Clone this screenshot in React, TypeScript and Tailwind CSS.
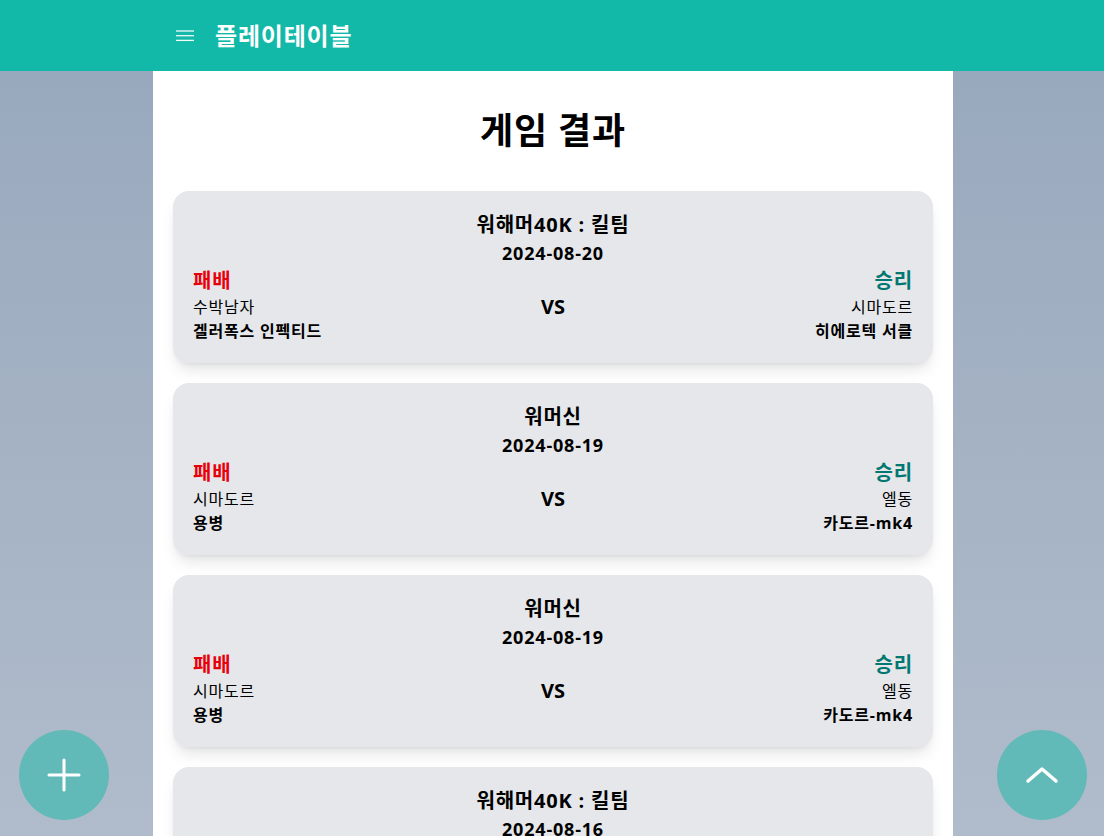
const games = [
  {
    title: "워해머40K : 킬팀",
    date: "2024-08-20",
    loser: { name: "수박남자", army: "겔러폭스 인펙티드" },
    winner: { name: "시마도르", army: "히에로텍 서클" },
  },
  {
    title: "워머신",
    date: "2024-08-19",
    loser: { name: "시마도르", army: "용병" },
    winner: { name: "엘동", army: "카도르-mk4" },
  },
  {
    title: "워머신",
    date: "2024-08-19",
    loser: { name: "시마도르", army: "용병" },
    winner: { name: "엘동", army: "카도르-mk4" },
  },
  {
    title: "워해머40K : 킬팀",
    date: "2024-08-16",
    loser: { name: "엘동", army: "헌터 클레이드" },
    winner: { name: "수박남자", army: "겔러폭스 인펙티드" },
  },
];

export default function App() {
  return (
    <div
      className="h-screen overflow-hidden bg-gradient-to-b from-[#97a7bc] to-[#b0bccb] tracking-[0.05em]"
      style={{ fontFamily: '"Open Sans", "Noto Sans CJK KR", sans-serif' }}
    >
      <header className="h-[71px] bg-[#13b9a8]">
        <div className="w-[800px] mx-auto translate-x-px h-full flex items-center pl-[22px] pr-5 gap-[20px]">
          <button className="w-[20px] h-[20px] flex items-center justify-center">
            <svg width="20" height="14" viewBox="0 0 20 14" fill="none" stroke="#f2fbfa" strokeWidth="1.3">
              <line x1="1" y1="2" x2="19" y2="2" />
              <line x1="1" y1="6.7" x2="19" y2="6.7" />
              <line x1="1" y1="11.4" x2="19" y2="11.4" />
            </svg>
          </button>
          <h1 className="text-2xl font-bold text-white leading-8">플레이테이블</h1>
        </div>
      </header>

      <main className="w-[800px] mx-auto translate-x-px bg-white min-h-full px-5 pt-10">
        <h2 className="text-4xl font-bold text-black text-center leading-10 mb-10">게임 결과</h2>
        <div className="flex flex-col gap-5">
          {games.map((g, i) => (
            <div key={i} className="bg-gray-200 rounded-2xl shadow-lg px-5 py-5">
              <div className="text-xl font-bold text-center leading-7">{g.title}</div>
              <div className="text-lg font-bold text-center leading-7">{g.date}</div>
              <div className="grid grid-cols-3 items-center">
                <div className="flex flex-col items-start">
                  <span className="text-xl font-bold text-red-600 leading-7">패배</span>
                  <span className="text-base leading-6">{g.loser.name}</span>
                  <span className="text-base font-bold leading-6">{g.loser.army}</span>
                </div>
                <div className="text-xl font-bold text-center pt-1 tracking-normal">VS</div>
                <div className="flex flex-col items-end">
                  <span className="text-xl font-bold text-teal-700 leading-7">승리</span>
                  <span className="text-base leading-6">{g.winner.name}</span>
                  <span className="text-base font-bold leading-6">{g.winner.army}</span>
                </div>
              </div>
            </div>
          ))}
        </div>
      </main>

      <button className="fixed left-[19px] bottom-[16px] w-[90px] h-[90px] rounded-full bg-[#62bab8] flex items-center justify-center">
        <svg width="34" height="34" viewBox="0 0 34 34" fill="none" stroke="white" strokeWidth="3" strokeLinecap="round">
          <line x1="17" y1="2" x2="17" y2="32" />
          <line x1="2" y1="17" x2="32" y2="17" />
        </svg>
      </button>
      <button className="fixed right-[17px] bottom-[16px] w-[90px] h-[90px] rounded-full bg-[#62bab8] flex items-center justify-center">
        <svg width="34" height="20" viewBox="0 0 34 20" fill="none" stroke="white" strokeWidth="3.5" strokeLinecap="round" strokeLinejoin="round">
          <polyline points="3,16 17,4 31,16" />
        </svg>
      </button>
    </div>
  );
}
